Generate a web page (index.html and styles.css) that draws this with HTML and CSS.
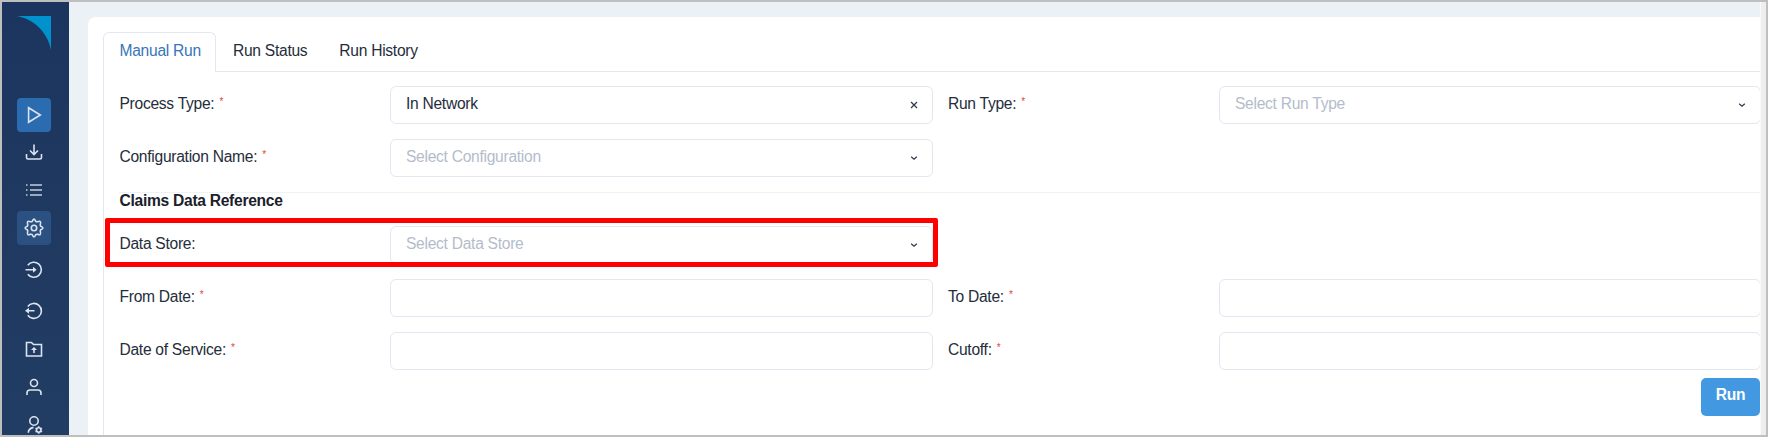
FILE: index.html
```
<!DOCTYPE html>
<html lang="en">
<head>
<meta charset="utf-8">
<title>Manual Run</title>
<link rel="stylesheet" href="styles.css">
</head>
<body>
<div class="window">
  <nav class="sidebar">
    <svg class="logo" viewBox="0 0 34 34"><path d="M0 0H34V34C31 17 17 3 0 0Z" fill="#0092cc"/></svg>
    <a class="nav-item active"><svg viewBox="0 0 20 20"><path d="M4.600 2.700L16.300 10 4.600 17.300Z"/></svg></a>
    <a class="nav-item"><svg viewBox="0 0 20 20"><path d="M10 2.500V12M6 8.500L10 12.500 14 8.500M2.500 12V15.500Q2.500 17 4 17H16Q17.500 17 17.500 15.500V12"/></svg></a>
    <a class="nav-item"><svg class="list" viewBox="0 0 20 20"><path d="M6 5H18M6 10H18M6 15H18M2 5H3.500M2 10H3.500M2 15H3.500"/></svg></a>
    <a class="nav-item hovered"><svg viewBox="0 0 20 20"><circle cx="10" cy="10" r="2.700"/><path d="M8.300 3.200Q10 -1 11.700 3.200Q12.400 4 13.600 3.700Q17.600 2 16.300 6.400Q16 7.600 16.800 8.300Q21 10 16.800 11.700Q16 12.400 16.300 13.600Q17.600 18 13.600 16.300Q12.400 16 11.700 16.800Q10 21 8.300 16.800Q7.600 16 6.400 16.300Q2.400 18 3.700 13.600Q4 12.400 3.200 11.700Q-1 10 3.200 8.300Q4 7.600 3.700 6.400Q2.400 2 6.400 3.700Q7.600 4 8.300 3.200Z"/></svg></a>
    <a class="nav-item in"><svg viewBox="0 0 20 20"><path d="M3.800 5.300A7.500 7.500 0 1 1 3.800 14.200M1.500 9.800H10"/><path class="solid" d="M9 6.800L12.600 9.800 9 12.800Z"/></svg></a>
    <a class="nav-item out"><svg viewBox="0 0 20 20"><path d="M3.800 5.500A7.500 7.500 0 1 1 3.800 14.300M4 9.800H10.500"/><path class="solid" d="M5 6.800L1 9.800 5 12.800Z"/></svg></a>
    <a class="nav-item"><svg viewBox="0 0 20 20"><path d="M2.500 3.500H7.500L9.500 5.500H17.500V17H2.500ZM10 14V9"/><path class="solid" d="M7 11L10 8 13 11Z"/></svg></a>
    <a class="nav-item"><svg viewBox="0 0 20 20"><circle cx="10" cy="6" r="3.500"/><path d="M3 18V16Q3 13 6 13H14Q17 13 17 16V18"/></svg></a>
    <a class="nav-item"><svg viewBox="0 0 20 20"><circle cx="10" cy="6" r="4.200"/><path d="M4.300 17.800Q4.300 13.500 9.500 12.400"/><circle cx="14.700" cy="15" r="2.200"/><path d="M14.700 11.300V12.500M14.700 17.500V18.700M11.500 13.200L12.500 13.800M17 16.200L18 16.800M11.500 16.800L12.500 16.200M17 13.800L18 13.200"/></svg></a>
  </nav>
  <main class="page">
    <section class="card">
      <div class="tabs">
        <div class="tab selected">Manual Run</div>
        <div class="tab">Run Status</div>
        <div class="tab">Run History</div>
      </div>
      <div class="content">
        <div class="row">
          <label>Process Type: <sup>*</sup></label>
          <div class="field">In Network<svg viewBox="0 0 8 8"><path d="M1 1L7 7M7 1L1 7"/></svg></div>
          <label>Run Type: <sup>*</sup></label>
          <div class="field empty">Select Run Type<svg viewBox="0 0 8 8"><path d="M1.200 2.700L4 5.200 6.800 2.700"/></svg></div>
        </div>
        <div class="row">
          <label>Configuration Name: <sup>*</sup></label>
          <div class="field empty">Select Configuration<svg viewBox="0 0 8 8"><path d="M1.200 2.700L4 5.200 6.800 2.700"/></svg></div>
        </div>
        <h2>Claims Data Reference</h2>
        <div class="row marked">
          <label>Data Store:</label>
          <div class="field empty">Select Data Store<svg viewBox="0 0 8 8"><path d="M1.200 2.700L4 5.200 6.800 2.700"/></svg></div>
          <div class="marker"></div>
        </div>
        <div class="row">
          <label>From Date: <sup>*</sup></label>
          <div class="field"></div>
          <label>To Date: <sup>*</sup></label>
          <div class="field"></div>
        </div>
        <div class="row">
          <label>Date of Service: <sup>*</sup></label>
          <div class="field"></div>
          <label>Cutoff: <sup>*</sup></label>
          <div class="field"></div>
        </div>
        <div class="actions"><button class="run">Run</button></div>
      </div>
    </section>
  </main>
  <div class="scrollbar"></div>
</div>
</body>
</html>
```
FILE: styles.css
```
* { box-sizing: border-box; }
body {
  margin: 0;
  font: 15.6px/20px "Liberation Sans", Arial, sans-serif;
  letter-spacing: -0.28px;
  color: #252d3b;
}
.window {
  display: flex;
  width: 1768px;
  height: 437px;
  border: 2px solid #bfbfbf;
  overflow: hidden;
}
.sidebar {
  flex: none;
  width: 67px;
  padding: 14px 0 0 15px;
  background: linear-gradient(#1c355e, #223d64);
  overflow: hidden;
}
.logo { display: block; width: 34px; height: 34px; margin-bottom: 47.5px; }
.nav-item {
  display: flex;
  align-items: center;
  justify-content: center;
  width: 34px;
  height: 34px;
  margin-bottom: 3.9px;
  border-radius: 4px;
}
.nav-item svg {
  width: 20px;
  height: 20px;
  fill: none;
  stroke: #dce3ee;
  stroke-width: 1.6;
}
.nav-item .solid { fill: #dce3ee; stroke: none; }
.nav-item .list { stroke: #c5cedb; }
.active { background: #2b6cb0; }
.hovered { background: #2b5182; margin-bottom: 7.5px; }
.in { margin-bottom: 7.5px; }
.page {
  flex: 1;
  min-width: 0;
  padding: 15px 0 0 19px;
  background: #ebf1f5;
  overflow: hidden;
}
.card {
  height: 430px;
  width: 1700px;
  padding: 15px 0 0 15px;
  background: #fff;
  border-radius: 8px 0 0 0;
}
.tabs { display: flex; height: 40px; border-bottom: 1px solid #e2e8f0; }
.tab { height: 40px; padding: 9px 16px 0 17px; white-space: nowrap; }
.tab + .tab + .tab { padding-left: 16px; }
.selected {
  width: 113px;
  padding: 8px 0 0 15.5px;
  color: #3676b8;
  background: #fff;
  border: 1px solid #e2e8f0;
  border-bottom: 0;
  border-radius: 6px 6px 0 0;
}
.content {
  height: 380px;
  padding: 14px 0 0 15px;
  border-left: 1px solid #e2e8f0;
}
.row {
  display: grid;
  grid-template-columns: 271px 543px 286px 542px;
  height: 38px;
  margin-bottom: 15px;
}
.row label { padding: 8px 0 0 0.5px; }
.row label:nth-of-type(2) { padding-left: 15px; }
sup {
  display: inline-block;
  margin-left: 1px;
  font-size: 10px;
  line-height: 0;
  vertical-align: 4px;
  color: #e53e3e;
}
.field {
  display: flex;
  align-items: center;
  justify-content: space-between;
  padding: 0 14px 2px 15px;
  border: 1px solid #e2e8f0;
  border-radius: 6px;
}
.empty { color: #b4bccb; }
.field svg {
  width: 8px;
  height: 8px;
  margin-top: 2px;
  fill: none;
  stroke: #2d3748;
  stroke-width: 1.2;
}
h2 {
  height: 34px;
  margin: 0;
  padding-left: 0.5px;
  font-size: 15.6px;
  line-height: 15px;
  color: #1a202c;
  border-top: 1px solid #edf2f7;
}
.marked { position: relative; margin-bottom: 15px; }
.marker {
  position: absolute;
  left: -14px;
  top: -8px;
  width: 832.5px;
  height: 49px;
  border: 5px solid #f00;
  border-radius: 2px;
}
.actions { display: flex; width: 1641px; justify-content: flex-end; margin-top: -7.5px; }
.run {
  width: 59px;
  height: 38px;
  padding: 0 0 3px;
  border: 0;
  border-radius: 5px;
  background: #4299e1;
  color: #fff;
  font: bold 15.6px "Liberation Sans", Arial, sans-serif;
  letter-spacing: -0.28px;
}
.scrollbar { flex: none; width: 6px; background: #eee; border-left: 1px solid #f9fafb; }
```
